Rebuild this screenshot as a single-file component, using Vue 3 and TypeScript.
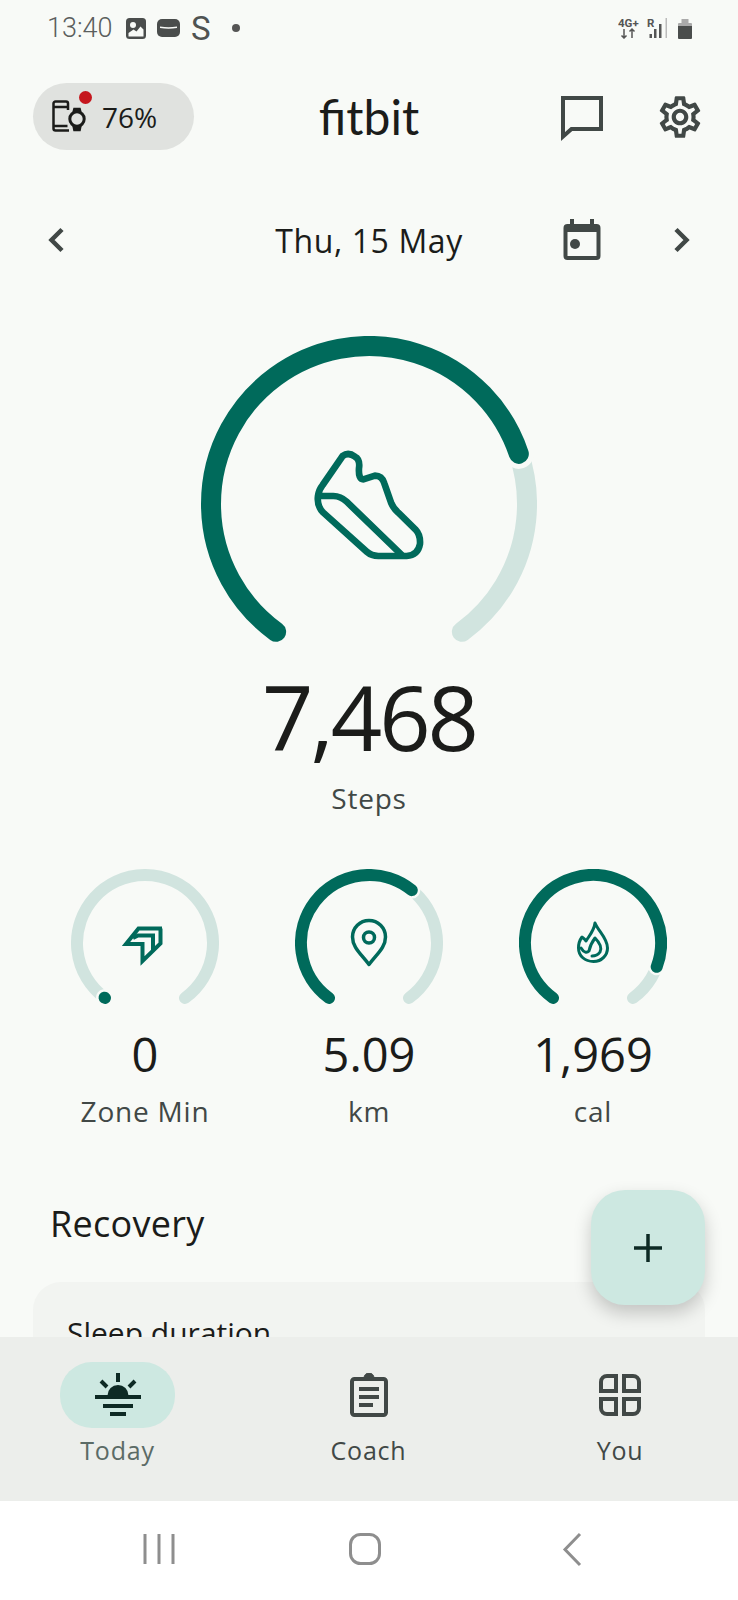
<script setup lang="ts">
type Gauge = {
  label: string
  value: string
  end: number
}

const gauges: Gauge[] = [
  { label: 'Zone Min', value: '0', end: 216.5 },
  { label: 'km', value: '5.09', end: 39 },
  { label: 'cal', value: '1,969', end: 110.5 },
]

const START = 216
const STOP = 144

// angle is measured clockwise from 12 o'clock
function point(c: number, r: number, angle: number) {
  const rad = (angle * Math.PI) / 180
  return `${(c + r * Math.sin(rad)).toFixed(2)} ${(c - r * Math.cos(rad)).toFixed(2)}`
}

function arc(c: number, r: number, from: number, to: number) {
  const sweep = ((to - from) % 360 + 360) % 360
  return `M${point(c, r, from)} A${r} ${r} 0 ${sweep > 180 ? 1 : 0} 1 ${point(c, r, to)}`
}

const gearPath =
  'M19.43 12.98c.04-.32.07-.64.07-.98 0-.34-.03-.66-.07-.98l2.11-1.65c.19-.15.24-.42.12-.64l-2-3.46c-.09-.16-.26-.25-.44-.25-.06 0-.12.01-.17.03l-2.49 1c-.52-.4-1.08-.73-1.69-.98l-.38-2.65C14.46 2.18 14.25 2 14 2h-4c-.25 0-.46.18-.49.42l-.38 2.65c-.61.25-1.17.59-1.69.98l-2.49-1c-.06-.02-.12-.03-.18-.03-.17 0-.34.09-.43.25l-2 3.46c-.13.22-.07.49.12.64l2.11 1.65c-.04.32-.07.65-.07.98 0 .33.03.66.07.98l-2.11 1.65c-.19.15-.24.42-.12.64l2 3.46c.09.16.26.25.44.25.06 0 .12-.01.17-.03l2.49-1c.52.4 1.08.73 1.69.98l.38 2.65c.03.24.24.42.49.42h4c.25 0 .46-.18.49-.42l.38-2.65c.61-.25 1.17-.59 1.69-.98l2.49 1c.06.02.12.03.18.03.17 0 .34-.09.43-.25l2-3.46c.12-.22.07-.49-.12-.64l-2.11-1.65zm-1.98-1.71c.04.31.05.52.05.73 0 .21-.02.43-.05.73l-.14 1.13.89.7 1.08.84-.7 1.21-1.27-.51-1.04-.42-.9.68c-.43.32-.84.56-1.25.73l-1.06.43-.16 1.13-.2 1.35h-1.4l-.19-1.35-.16-1.13-1.06-.43c-.43-.18-.83-.41-1.23-.71l-.91-.7-1.06.43-1.27.51-.7-1.21 1.08-.84.89-.7-.14-1.13c-.03-.31-.05-.54-.05-.74s.02-.43.05-.73l.14-1.13-.89-.7-1.08-.84.7-1.21 1.27.51 1.04.42.9-.68c.43-.32.84-.56 1.25-.73l1.06-.43.16-1.13.2-1.35h1.39l.19 1.35.16 1.13 1.06.43c.43.18.83.41 1.23.71l.91.7 1.06-.43 1.27-.51.7 1.21-1.07.85-.89.7.14 1.13zM12 8c-2.21 0-4 1.79-4 4s1.79 4 4 4 4-1.79 4-4-1.79-4-4-4zm0 6c-1.1 0-2-.9-2-2s.9-2 2-2 2 .9 2 2-.9 2-2 2z'
</script>

<template>
  <div class="phone">
    <div class="status">
      <div class="status__left">
        <span class="status__time">13:40</span>
        <svg class="status__pic" width="20" height="21" viewBox="0 0 20 21">
          <rect width="20" height="21" rx="3.5" fill="#4a4d4c" />
          <circle cx="7" cy="7" r="3" fill="#f8faf7" />
          <path d="M2.5 18.5V15l5-3.5 3 2 4-5 3 3v7z" fill="#f8faf7" />
        </svg>
        <svg class="status__wallet" width="23" height="18" viewBox="0 0 23 18">
          <rect width="23" height="18" rx="5" fill="#4a4d4c" />
          <path d="M3 7.5c6 1 11 1 17 0v1.5c-6 1-11 1-17 0z" fill="#f8faf7" />
        </svg>
        <span class="status__s">S</span>
        <span class="status__dot" />
      </div>
      <svg class="status__right" width="76" height="22" viewBox="0 0 76 22">
        <text x="0" y="10" class="status__tiny">4G+</text>
        <text x="29" y="10" class="status__tiny">R</text>
        <g fill="none" stroke="#555" stroke-width="1.5">
          <path d="M6 12v9M3.5 18.5 6 21l2.5-2.5M14 21v-9M11.5 14.5 14 12l2.5 2.5" />
        </g>
        <rect x="31.5" y="17" width="2.5" height="4" fill="#555" />
        <rect x="36" y="12" width="2.5" height="9" fill="#555" />
        <rect x="41" y="7" width="2.5" height="14" fill="#555" />
        <rect x="47.5" y="1" width="1.5" height="20" fill="#bbb" />
        <path d="M60 7q0-1 1-1h2.5v-4h7v4h2.5q1 0 1 1v3h-14z" fill="#aaa" />
        <path d="M60 9h14v12q0 1-1 1h-12q-1 0-1-1z" fill="#4a4d4c" />
      </svg>
    </div>

    <header class="header">
      <div class="pill">
        <svg class="pill__icon" width="36" height="34" viewBox="0 0 36 34" fill="none" stroke="#1b1c1a" stroke-width="2.5">
          <path d="M16 10V3.5a2 2 0 0 0-2-2H3.5a2 2 0 0 0-2 2v25a2 2 0 0 0 2 2H17M1.5 7h14.500M1.5 26h14" />
          <circle cx="25" cy="19" r="7.2" stroke-width="3" />
          <path d="M21 12.5 22 8.5h6l1 4M21 25.5l1 5h6l1-5" fill="#1b1c1a" stroke-width="1.5" />
        </svg>
        <span class="pill__alert" />
        <span class="pill__value">76%</span>
      </div>
      <div class="logo">fitbit</div>
      <div class="header__actions">
        <svg width="50" height="50" viewBox="0 0 50 50" fill="none" stroke="#414846" stroke-width="4">
          <path d="M6 6h38v31H14.5L6 44.5z" />
        </svg>
        <svg width="50" height="50" viewBox="0 0 24 24" fill="#414846"><path :d="gearPath" /></svg>
      </div>
    </header>

    <div class="date">
      <svg class="date__chev" width="48" height="48" viewBox="0 0 48 48" fill="none" stroke="#414846" stroke-width="4.5">
        <path d="M29 13.5 18.5 24 29 34.5" />
      </svg>
      <div class="date__label">Thu, 15 May</div>
      <div class="date__right">
        <svg width="48" height="48" viewBox="0 0 48 48" fill="#414846">
          <path fill-rule="evenodd" d="M8.5 8h29a4 4 0 0 1 4 4v28a4 4 0 0 1-4 4h-29a4 4 0 0 1-4-4V12a4 4 0 0 1 4-4zM8.5 16v24h29V16z" />
          <rect x="11" y="3" width="4" height="6" />
          <rect x="31" y="3" width="4" height="6" />
          <circle cx="16" cy="28" r="5" />
        </svg>
        <svg class="date__chev" width="48" height="48" viewBox="0 0 48 48" fill="none" stroke="#414846" stroke-width="4.5">
          <path d="M19 13.5 29.5 24 19 34.5" />
        </svg>
      </div>
    </div>

    <main class="feed">
      <section class="hero">
        <svg class="hero__ring" width="336" height="320" viewBox="0 0 336 320" fill="none" stroke-linecap="round">
          <path :d="arc(168, 158, START, STOP)" stroke="#d1e4df" stroke-width="20" />
          <path :d="arc(168, 158, START, 71.5)" stroke="#f8faf7" stroke-width="30" />
          <path :d="arc(168, 158, START, 71.5)" stroke="#006a5b" stroke-width="20" />
          <g transform="translate(-21 -16) scale(.3333)" stroke="#006a5b" stroke-width="20" stroke-linejoin="round">
            <path d="M488 408Q505 395 525 410Q541 418 537 445Q535 478 550 478L585 467Q606 467 613 490L634 550Q640 565 655 578L706 628Q722 645 720 672Q714 706 680 708H595Q575 708 560 695L430 578Q410 558 414 528Q416 510 428 495z" />
            <path d="M418 528H460Q482 528 500 545L665 705" />
          </g>
        </svg>
        <div class="hero__value">7,468</div>
        <div class="hero__label">Steps</div>
      </section>

      <section class="gauges">
        <div v-for="(gauge, i) in gauges" :key="gauge.label" class="gauge">
          <svg class="gauge__ring" width="148" height="140" viewBox="0 0 148 140" fill="none" stroke-linecap="round">
            <path :d="arc(74, 68, START, STOP)" stroke="#d1e4df" stroke-width="12" />
            <path :d="arc(74, 68, START, gauge.end)" stroke="#f8faf7" stroke-width="17" />
            <path :d="arc(74, 68, START, gauge.end)" stroke="#006a5b" stroke-width="12" />
            <g v-if="i === 0" transform="translate(45 50)" stroke="#006a5b" stroke-width="4" stroke-linecap="butt">
              <path d="M46 9.5H22.5L10 25H26.5V42L44.5 24.5V9.5Z" />
              <path d="M17 19 22 16.5H37V31" />
            </g>
            <g v-else-if="i === 1" transform="translate(-295 -869)" stroke="#006a5b" stroke-width="3.5" stroke-linejoin="round">
              <path d="M369 964.5C360 953 352.5 947 352.5 937A16.5 16.5 0 0 1 385.5 937C385.5 947 378 953 369 964.5Z" />
              <circle cx="369" cy="937.5" r="5.5" />
            </g>
            <g v-else transform="translate(-519 -869)" stroke="#006a5b" stroke-width="3" stroke-linejoin="round">
              <path d="M595 923C594 931 589 936 586 941C585 939 583 938 582 937C579 941 578.5 945 578.5 948C578.5 956 585 961.5 593.5 961.5C602 961.5 607.5 955 607.5 948C607.5 938 598 931 595 923Z" />
              <path d="M581 948C584 953 587 953 589 951C590 946 592 942 595 938C600 943 602 948 600 952C598 955 595 956 592 956" />
            </g>
          </svg>
          <div class="gauge__value">{{ gauge.value }}</div>
          <div class="gauge__label">{{ gauge.label }}</div>
        </div>
      </section>

      <h2 class="section-title">Recovery</h2>
      <div class="card">
        <div class="card__title">Sleep duration</div>
      </div>

      <button class="fab" type="button">
        <svg width="34" height="34" viewBox="0 0 34 34" stroke="#0d2a24" stroke-width="3.5"><path d="M17 3v28M3 17h28" /></svg>
      </button>
    </main>

    <nav class="tabs">
      <div class="tab">
        <span class="tab__icon tab__icon--active">
          <svg width="48" height="44" viewBox="0 0 48 44" fill="none" stroke="#0d2a24" stroke-width="4">
            <path d="M24 0v9M7 8l6 6M41 8l-6 6M1 24h46M9 33h30M16 41h16" />
            <path d="M13.5 22.5a10.5 10.5 0 0 1 21 0z" fill="#0d2a24" stroke="none" />
          </svg>
        </span>
        <span class="tab__label tab__label--active">Today</span>
      </div>
      <div class="tab">
        <span class="tab__icon">
          <svg width="40" height="44" viewBox="0 0 40 44" fill="none" stroke="#414846" stroke-width="4">
            <rect x="3" y="6" width="34" height="36" rx="2.5" />
            <path d="M15 5a5 5 0 0 1 10 0z" fill="#414846" stroke-width="1" />
            <path d="M10 16h20M10 24h20M10 32h14" />
          </svg>
        </span>
        <span class="tab__label">Coach</span>
      </div>
      <div class="tab">
        <span class="tab__icon">
          <svg width="42" height="42" viewBox="0 0 42 42" fill="none" stroke="#414846" stroke-width="4">
            <path d="M2 17V8a6 6 0 0 1 6-6h9v15zM40 17V8a6 6 0 0 0-6-6h-9v15zM2 25v9a6 6 0 0 0 6 6h9V25zM40 25v9a6 6 0 0 1-6 6h-9V25z" />
          </svg>
        </span>
        <span class="tab__label">You</span>
      </div>
    </nav>

    <div class="sysnav">
      <svg width="738" height="99" viewBox="0 0 738 99" fill="none" stroke="#8e8e8e" stroke-width="3">
        <path d="M145 33v30M159 33v30M173 33v30" />
        <rect x="350.5" y="33.5" width="29" height="29" rx="10" />
        <path d="M580 33 565 48.5 580 64" />
      </svg>
    </div>
  </div>
</template>

<style scoped>
.phone {
  position: relative;
  display: flex;
  flex-direction: column;
  width: 738px;
  height: 1600px;
  overflow: hidden;
  background: #f8faf7;
  color: #1b1c1a;
  font-family: 'Open Sans', 'Noto Sans', sans-serif;
}

.status {
  display: flex;
  flex: none;
  align-items: center;
  justify-content: space-between;
  height: 56px;
  padding: 0 44px 0 47px;
}

.status__left {
  display: flex;
  align-items: center;
}

.status__time {
  width: 79px;
  color: #5b5e5d;
  font-family: Roboto, sans-serif;
  font-size: 27px;
  font-weight: 300;
}

.status__wallet {
  margin-left: 11px;
}

.status__s {
  margin-left: 11px;
  color: #4f5352;
  font-family: Roboto, sans-serif;
  font-size: 33px;
  line-height: 1;
}

.status__dot {
  width: 8px;
  height: 8px;
  margin-left: 21px;
  border-radius: 50%;
  background: #555;
}

.status__tiny {
  fill: #555;
  font-family: Roboto, sans-serif;
  font-size: 11.5px;
  font-weight: 700;
}

.header {
  display: grid;
  flex: none;
  grid-template-columns: 1fr auto 1fr;
  align-items: center;
  height: 67px;
  margin-top: 27px;
  padding: 0 33px;
}

.pill {
  position: relative;
  display: flex;
  align-items: center;
  width: 161px;
  height: 67px;
  padding-left: 19px;
  box-sizing: border-box;
  border-radius: 34px;
  background: #e0e2df;
}

.pill__alert {
  position: absolute;
  top: 8px;
  left: 46px;
  width: 13px;
  height: 13px;
  border-radius: 50%;
  background: #c5161d;
}

.pill__value {
  margin-left: 14px;
  font-size: 28px;
}

.logo {
  font-family: Lato, sans-serif;
  font-size: 48px;
  line-height: 1;
}

.header__actions {
  display: flex;
  gap: 48px;
  justify-content: flex-end;
}

.date {
  display: grid;
  flex: none;
  grid-template-columns: 1fr auto 1fr;
  align-items: center;
  height: 60px;
  margin-top: 60px;
  padding: 0 33px;
}

.date__chev {
  display: block;
}

.date__label {
  font-size: 32px;
  letter-spacing: 0.6px;
}

.date__right {
  display: flex;
  gap: 50px;
  justify-content: flex-end;
}

.feed {
  position: relative;
  flex: 1;
  min-height: 0;
  overflow: hidden;
  padding-top: 66px;
}

.hero {
  display: flex;
  flex-direction: column;
  align-items: center;
}

.hero__ring {
  display: block;
}

.hero__value {
  margin-top: 5px;
  font-size: 90px;
  letter-spacing: -3px;
  line-height: 110px;
}

.hero__label {
  margin-top: 9px;
  color: #414846;
  font-size: 28px;
  font-weight: 500;
  letter-spacing: 0.8px;
  line-height: 36px;
}

.gauges {
  display: grid;
  grid-template-columns: repeat(3, 224px);
  margin-top: 53px;
  padding: 0 33px;
}

.gauge {
  display: flex;
  flex-direction: column;
  align-items: center;
}

.gauge__ring {
  display: block;
}

.gauge__value {
  margin-top: 15px;
  font-size: 47px;
  line-height: 60px;
}

.gauge__label {
  margin-top: 9px;
  color: #414846;
  font-size: 28px;
  font-weight: 500;
  letter-spacing: 0.8px;
  line-height: 36px;
}

.section-title {
  margin: 73px 0 0 50px;
  font-size: 36px;
  font-weight: 400;
  letter-spacing: 0.3px;
  line-height: 44px;
}

.card {
  height: 100px;
  margin: 36px 33px 0;
  padding: 33px 34px 0;
  border-radius: 28px;
  background: #f2f4f1;
}

.card__title {
  font-size: 30px;
  line-height: 36px;
}

.fab {
  position: absolute;
  top: 920px;
  left: 591px;
  display: flex;
  align-items: center;
  justify-content: center;
  width: 114px;
  height: 115px;
  padding: 0;
  border: none;
  border-radius: 34px;
  background: #cde8e1;
  box-shadow: 0 8px 18px rgba(0, 0, 0, 0.2);
}

.tabs {
  display: grid;
  flex: none;
  grid-template-columns: 235px 1fr 236px;
  height: 164px;
  background: #eceeeb;
}

.tab {
  display: flex;
  flex-direction: column;
  align-items: center;
  padding-top: 25px;
}

.tab__icon {
  display: flex;
  align-items: center;
  justify-content: center;
  width: 115px;
  height: 66px;
  border-radius: 32px;
}

.tab__icon--active {
  background: #cde8e1;
}

.tab__label {
  margin-top: 4px;
  color: #414846;
  font-size: 25px;
  letter-spacing: 0.8px;
  line-height: 36px;
}

.tab__label--active {
  color: #5b6b66;
}

.sysnav {
  flex: none;
  height: 99px;
  background: #fff;
}

.sysnav svg {
  display: block;
}
</style>
